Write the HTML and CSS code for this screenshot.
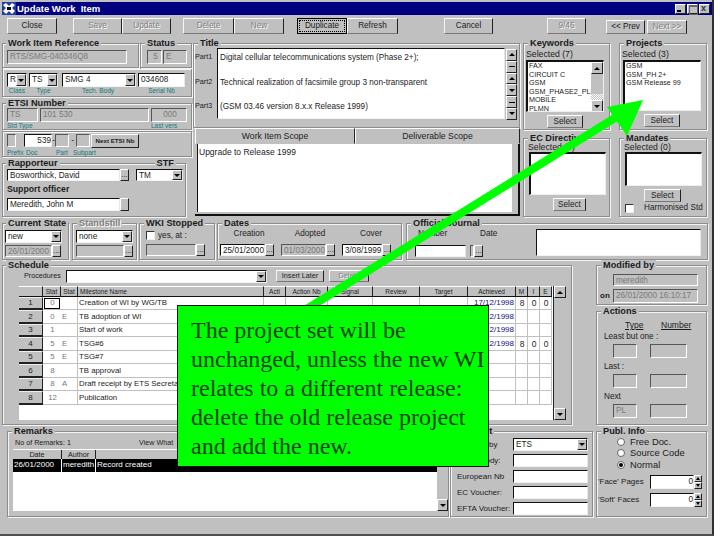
FILE: index.html
```html
<!DOCTYPE html>
<html lang="en">
<head>
<meta charset="utf-8">
<title>Update Work Item</title>
<link rel="stylesheet" href="styles.css">
</head>
<body>
<div class="window">
  <div class="titlebar">
    <svg class="app-icon" width="14" height="13" viewBox="0 0 14 13"><rect width="14" height="13" fill="#2040a0"/><path d="M1 3l3-2 3 3 3-3 3 2-3 3 3 3-3 3-3-3-3 3-3-3 3-3z" fill="#fff"/><path d="M5 5h4v3H5z" fill="#000"/></svg>
    <span class="title-text">Update Work&nbsp; Item</span>
    <div class="win-btns">
      <span class="win-btn min"></span><span class="win-btn max"></span><span class="win-btn cls"></span>
    </div>
  </div>

  <div class="toolbar">
    <button class="btn tb w50">Close</button>
    <button class="btn tb w49 dis ml16">Save</button>
    <button class="btn tb w49 dis">Update</button>
    <button class="btn tb w51 dis ml12">Delete</button>
    <button class="btn tb w50 dis">New</button>
    <button class="btn tb w50 focus ml13">Duplicate</button>
    <button class="btn tb w51">Refresh</button>
    <button class="btn tb w49 ml46">Cancel</button>
    <button class="btn tb w39 dis ml54">9/46</button>
    <button class="btn nav w39 ml20">&lt;&lt; Prev</button>
    <button class="btn nav w40 dis ml2">Next &gt;&gt;</button>
  </div>

  <div class="band1">
    <div class="col-a">
      <div class="ref-row">
        <div class="frame ref-frame">
          <div class="lg">Work Item Reference</div>
          <div class="fld dis-f w120 h14">RTS/SMG-040346Q8</div>
        </div>
        <div class="frame status-frame">
          <div class="lg">Status</div>
          <div class="flex-row g1">
            <div class="fld dis-f w15 h14 ctr">5</div>
            <div class="fld dis-f w24 h14">E</div>
          </div>
        </div>
      </div>
      <div class="box box-class">
        <div class="grid-class">
          <div class="fld combo h14"><span class="grow">R</span><span class="arr dn"></span></div>
          <div class="fld combo h14"><span class="grow">TS</span><span class="arr dn"></span></div>
          <div class="fld combo h14"><span class="grow">SMG 4</span><span class="arr dn"></span></div>
          <div class="fld h14">034608</div>
          <div class="tiny ctr">Class</div>
          <div class="tiny ctr">Type</div>
          <div class="tiny ctr">Tech. Body</div>
          <div class="tiny ctr">Serial Nb</div>
        </div>
      </div>
      <div class="frame etsi-frame">
        <div class="lg">ETSI Number</div>
        <div class="grid-etsi">
          <div class="fld dis-f h14">TS</div>
          <div class="fld dis-f h14">101 530</div>
          <div class="fld dis-f h14 ctr">000</div>
          <div class="tiny">Std Type</div>
          <div></div>
          <div class="tiny">Last vers</div>
        </div>
      </div>
      <div class="box box-doc">
        <div class="grid-doc">
          <div class="fld dis-f h13 cell-a"></div>
          <div class="fld h13 right cell-b">539</div>
          <div class="sep">-</div>
          <div class="fld dis-f h13"></div>
          <div class="sep">-</div>
          <div class="fld dis-f h13"></div>
          <div></div>
          <button class="btn next-btn">Next ETSI Nb</button>
        </div>
        <div class="grid-doc-labels">
          <span class="tiny">Prefix</span><span class="tiny">Doc</span><span class="tiny">Part</span><span class="tiny">Subpart</span>
        </div>
      </div>
      <div class="frame rapp-frame">
        <div class="lg-row">
          <div class="lg flush">Rapporteur</div>
          <div class="lg flush stf-lg">STF</div>
        </div>
        <div class="flex-row">
          <div class="fld w113 h12">Bosworthick, David</div>
          <span class="dots h12">...</span>
          <div class="fld combo w47 h12 ml7"><span class="grow">TM</span><span class="arr dn"></span></div>
        </div>
        <div class="bold-label">Support officer</div>
        <div class="flex-row">
          <div class="fld w113 h13">Meredith, John M</div>
          <span class="dots h13"></span>
        </div>
      </div>
    </div>

    <div class="col-b">
      <div class="frame title-frame">
        <div class="lg">Title</div>
        <div class="title-body">
          <div class="part-labels"><span>Part1</span><span>Part2</span><span>Part3</span></div>
          <div class="fld part-box">
            <span>Digital cellular telecommunications system (Phase 2+);</span>
            <span>Technical realization of facsimile group 3 non-transparent</span>
            <span>(GSM 03.46 version 8.x.x Release 1999)</span>
          </div>
          <div class="spin-col">
            <span class="arr up tall"></span><span class="arr bar tall"></span>
            <span class="arr up tall"></span><span class="arr dn tall"></span>
            <span class="arr bar tall"></span><span class="arr dn tall"></span>
          </div>
        </div>
      </div>
      <div class="tabs">
        <div class="tab tab-a">Work Item Scope</div>
        <div class="tab tab-b">Deliverable Scope</div>
      </div>
      <div class="scope-panel">
        <div class="scope-text">Upgrade to Release 1999</div>
      </div>
    </div>

    <div class="col-c">
      <div class="frame kw-frame">
        <div class="lg">Keywords</div>
        <div class="sel-label">Selected (7)</div>
        <div class="list kw-list">
          <div class="list-items">
            <div>FAX</div><div>CIRCUIT C</div><div>GSM</div><div>GSM_PHASE2_PLUS</div><div>MOBILE</div><div>PLMN</div>
          </div>
          <div class="vscroll"><span class="arr up"></span><span class="track"><span class="thumb"></span></span><span class="arr dn"></span></div>
        </div>
        <div class="btn-row"><button class="btn sel w36">Select</button></div>
      </div>
      <div class="frame ec-frame">
        <div class="lg">EC Directive</div>
        <div class="sel-label tight">Selected (0)</div>
        <div class="list ec-list"></div>
        <div class="btn-row"><button class="btn sel w33 ec-btn">Select</button></div>
      </div>
    </div>

    <div class="col-d">
      <div class="frame kw-frame">
        <div class="lg">Projects</div>
        <div class="sel-label">Selected (3)</div>
        <div class="list pj-list">
          <div class="list-items">
            <div>GSM</div><div>GSM_PH 2+</div><div>GSM Release 99</div>
          </div>
        </div>
        <div class="btn-row"><button class="btn sel w36 pj-btn">Select</button></div>
      </div>
      <div class="frame ec-frame">
        <div class="lg">Mandates</div>
        <div class="sel-label tight">Selected (0)</div>
        <div class="list md-list"></div>
        <div class="btn-row"><button class="btn sel w37 md-btn">Select</button></div>
        <div class="harm"><span class="check"></span><span>Harmonised Std</span></div>
      </div>
    </div>
  </div>

  <div class="band2">
    <div class="frame cs-frame">
      <div class="lg">Current State</div>
      <div class="fld combo w57 h13"><span class="grow">new</span><span class="arr dn"></span></div>
      <div class="flex-row mt2">
        <div class="fld dis-f w47 h12">26/01/2000</div><span class="dots h12 w10">...</span>
      </div>
    </div>
    <div class="frame ss-frame">
      <div class="lg muted">Standstill</div>
      <div class="fld combo w57 h13"><span class="grow">none</span><span class="arr dn"></span></div>
      <div class="flex-row mt2">
        <div class="fld dis-f w48 h12"></div><span class="dots h12">...</span>
      </div>
    </div>
    <div class="frame wk-frame">
      <div class="lg">WKI Stopped</div>
      <div class="yes-row"><span class="check"></span><span>yes, at :</span></div>
      <div class="flex-row wk-field">
        <div class="fld dis-f w50 h12"></div><span class="dots h12">...</span>
      </div>
    </div>
    <div class="frame dt-frame">
      <div class="lg">Dates</div>
      <div class="grid-dates">
        <div class="ctr lbl">Creation</div><div class="ctr lbl">Adopted</div><div class="ctr lbl">Cover</div>
        <div class="flex-row"><div class="fld grow h12 clip">25/01/2000</div><span class="dots h12">...</span></div>
        <div class="flex-row"><div class="fld dis-f grow h12 clip">01/03/2000</div><span class="dots h12">...</span></div>
        <div class="flex-row"><div class="fld grow h12 clip">3/08/1999</div><span class="dots h12">...</span></div>
      </div>
    </div>
    <div class="frame oj-frame">
      <div class="lg">Official Journal</div>
      <div class="oj-body">
        <div class="grid-oj">
          <div class="lbl oj-num">Number</div><div class="lbl oj-date">Date</div>
          <div class="fld h12"></div>
          <div class="flex-row"><div class="fld dis-f grow h12"></div><span class="dots h12">...</span></div>
        </div>
        <div class="fld oj-big"></div>
      </div>
    </div>
  </div>

  <div class="band3">
    <div class="left3">
      <div class="frame sch-frame">
        <div class="lg">Schedule</div>
        <div class="proc-row">
          <span class="proc-label">Procedures</span>
          <div class="fld combo w201 h13"><span class="grow"></span><span class="arr dn"></span></div>
          <button class="btn proc-btn w48 ml9">Insert Later</button>
          <button class="btn proc-btn w40 ml5 dis">Delete</button>
        </div>
        <div class="sch-grid-wrap">
          <div class="sch-grid">
            <table class="sch">
              <colgroup>
                <col class="c24"><col class="c18"><col class="c17"><col class="c186"><col class="c22"><col class="c42"><col class="c45"><col class="c47"><col class="c48"><col class="c48"><col class="c12"><col class="c12"><col class="c12">
              </colgroup>
              <thead>
                <tr><th></th><th>Stat</th><th>Stat</th><th class="left">Milestone Name</th><th>Acti</th><th>Action Nb</th><th>Signal</th><th>Review</th><th>Target</th><th>Achieved</th><th>M</th><th>I</th><th>E</th></tr>
              </thead>
              <tbody>
                <tr><th>1</th><td class="num cur">0</td><td class="st"></td><td>Creation of WI by WG/TB</td><td></td><td></td><td></td><td></td><td></td><td class="ach">17/12/1998</td><td class="m">8</td><td class="m">0</td><td class="m">0</td></tr>
                <tr><th>2</th><td class="num">0</td><td class="st">E</td><td>TB adoption of WI</td><td></td><td></td><td></td><td></td><td></td><td class="ach">17/12/1998</td><td></td><td></td><td></td></tr>
                <tr><th>3</th><td class="num">1</td><td class="st"></td><td>Start of work</td><td></td><td></td><td></td><td></td><td></td><td class="ach">17/12/1998</td><td></td><td></td><td></td></tr>
                <tr><th>4</th><td class="num">5</td><td class="st">E</td><td>TSG#6</td><td></td><td></td><td></td><td></td><td></td><td class="ach">17/12/1998</td><td class="m">8</td><td class="m">0</td><td class="m">0</td></tr>
                <tr><th>5</th><td class="num">5</td><td class="st">E</td><td>TSG#7</td><td></td><td></td><td></td><td></td><td></td><td></td><td></td><td></td><td></td></tr>
                <tr><th>6</th><td class="num">8</td><td class="st"></td><td>TB approval</td><td></td><td></td><td></td><td></td><td></td><td></td><td></td><td></td><td></td></tr>
                <tr><th>7</th><td class="num">8</td><td class="st">A</td><td>Draft receipt by ETS Secretariat</td><td></td><td></td><td></td><td></td><td></td><td></td><td></td><td></td><td></td></tr>
                <tr><th>8</th><td class="num">12</td><td class="st"></td><td>Publication</td><td></td><td></td><td></td><td></td><td></td><td></td><td></td><td></td><td></td></tr>
              </tbody>
            </table>
          </div>
          <div class="vscroll sch-scroll"><span class="arr up"></span><span class="track"></span><span class="arr dn"></span></div>
        </div>
      </div>
      <div class="row-bottom">
        <div class="frame rm-frame">
          <div class="lg">Remarks</div>
          <div class="rm-top"><span class="rm-count">No of Remarks: 1</span><span>View What</span></div>
          <div class="rm-grid">
            <div class="rm-main">
              <div class="rm-head"><span class="rm-c1">Date</span><span class="rm-c2">Author</span><span class="rm-c3"></span></div>
              <div class="rm-row"><span class="rm-c1">26/01/2000</span><span class="rm-c2">meredith</span><span class="rm-c3">Record created</span></div>
            </div>
            <div class="vscroll rm-scroll"><span class="track"></span><span class="arr dn"></span></div>
          </div>
        </div>
        <div class="frame eu-frame">
          <div class="lg">Contact</div>
          <div class="eu-grid">
            <span class="eu-l">Handled by</span><div class="fld combo h13"><span class="grow">ETS</span><span class="arr dn"></span></div>
            <span class="eu-l">Resp. Body:</span><div class="fld h13"></div>
            <span class="eu-l">European Nb</span><div class="fld h13"></div>
            <span class="eu-l">EC Voucher:</span><div class="fld h13"></div>
            <span class="eu-l">EFTA Voucher:</span><div class="fld h13"></div>
          </div>
        </div>
      </div>
    </div>

    <div class="right3">
      <div class="frame mod-frame">
        <div class="lg">Modified by</div>
        <div class="fld dis-f w85 h12 mod-a">meredith</div>
        <div class="flex-row mod-b"><span class="on">on</span><div class="fld dis-f w85 h14">26/01/2000 16:10:17</div></div>
      </div>
      <div class="frame act-frame">
        <div class="lg">Actions</div>
        <div class="act-head"><span class="u type">Type</span><span class="u">Number</span></div>
        <div class="act-lbl">Least but one :</div>
        <div class="act-row"><div class="fld dis-f w24 h14"></div><div class="fld dis-f w37 h14"></div></div>
        <div class="act-lbl">Last :</div>
        <div class="act-row"><div class="fld dis-f w24 h14"></div><div class="fld dis-f w37 h14"></div></div>
        <div class="act-lbl">Next</div>
        <div class="act-row"><div class="fld dis-f w24 h14">PL</div><div class="fld dis-f w37 h14"></div></div>
      </div>
      <div class="frame pub-frame">
        <div class="lg">Publ. Info</div>
        <div class="radio-row"><span class="radio"></span><span>Free Doc.</span></div>
        <div class="radio-row"><span class="radio"></span><span>Source Code</span></div>
        <div class="radio-row"><span class="radio on-r"></span><span>Normal</span></div>
        <div class="pg-row first"><span class="pg-l">'Face' Pages</span><div class="fld w44 h14 right">0</div><span class="updown"><i class="arr up"></i><i class="arr dn"></i></span></div>
        <div class="pg-row"><span class="pg-l">'Soft' Faces</span><div class="fld w44 h14 right">0</div><span class="updown"><i class="arr up"></i><i class="arr dn"></i></span></div>
      </div>
    </div>
  </div>

  <svg class="arrow" width="714" height="536" viewBox="0 0 714 536">
    <line x1="305" y1="310" x2="618" y2="116" stroke="#00ff00" stroke-width="8"/>
    <polygon points="643,100 607,107 627,136" fill="#00ff00"/>
  </svg>

  <div class="callout">The project set will be unchanged, unless the new WI relates to a different release: delete the old release project and add the new.</div>
</div>
</body>
</html>
```

FILE: styles.css
```css
* { box-sizing: border-box; }
html, body { margin: 0; padding: 0; background: #fff; }
body { font: 8.2px/10px "Liberation Sans", Arial, sans-serif; color: #1c1c1c; }

.window {
  position: relative;
  width: 714px;
  height: 536px;
  background: #c0c0c0;
  border-right: 2px solid #303030;
  border-bottom: 2px solid #505050;
  padding-top: 2px;
  overflow: hidden;
}

/* title bar */
.titlebar {
  display: flex;
  align-items: center;
  height: 13px;
  margin-left: 2px;
  background: #000080;
  color: #fff;
}
.app-icon { margin-right: 1px; flex: none; }
.title-text { font-size: 9.5px; font-weight: bold; }
.win-btns { margin-left: auto; margin-right: 2px; display: flex; gap: 1px; }
.win-btn {
  width: 11px; height: 10px; background: #c0c0c0;
  border: 1px solid; border-color: #fff #222 #222 #fff; position: relative;
}
.min::after { content: ""; position: absolute; left: 1px; bottom: 1px; width: 4px; height: 2px; background: #000; }
.max::after { content: ""; position: absolute; left: 1px; top: 0; width: 7px; height: 7px; border: 1px solid #666; border-top-width: 2px; }
.cls::after { content: "x"; position: absolute; left: 1px; top: -2px; font: bold 9px/10px "Liberation Sans", sans-serif; color: #333; }

/* buttons */
.btn {
  display: block;
  margin: 0;
  padding: 0;
  font: 8.2px/10px "Liberation Sans", Arial, sans-serif;
  color: #1c1c1c;
  background: #c0c0c0;
  border: 1px solid;
  border-color: #fff #222 #777 #f4f4f4;
  border-radius: 0;
  white-space: nowrap;
  overflow: hidden;
}
.btn.dis { color: #808080; text-shadow: 1px 1px 0 #fff; }
.btn.focus { border: 1px solid #000; outline: 1px dotted #000; outline-offset: -3px; }
.toolbar { display: flex; align-items: flex-start; height: 16px; margin-top: 3px; padding-left: 7px; }
.tb { height: 16px; }
.nav { height: 14px; margin-top: 2px; }
.sel { height: 13px; }
.proc-btn { height: 12px; font-size: 7.2px; }
.next-btn { height: 14px; font-size: 6.2px; font-weight: bold; border-bottom-color: #222; }

/* sizes */
.w10 { width: 10px; flex: none; } .w15 { width: 15px; } .w24 { width: 24px; } .w33 { width: 33px; } .w36 { width: 36px; } .w37 { width: 37px; }
.w39 { width: 39px; } .w40 { width: 40px; } .w44 { width: 44px; } .w47 { width: 47px; } .w48 { width: 48px; } .w49 { width: 49px; }
.w50 { width: 50px; } .w51 { width: 51px; } .w57 { width: 57px; } .w85 { width: 85px; } .w113 { width: 113px; } .w120 { width: 120px; } .w201 { width: 201px; }
.h12 { height: 12px; } .h13 { height: 13px; } .h14 { height: 14px; }
.ml2 { margin-left: 2px; } .ml5 { margin-left: 5px; } .ml7 { margin-left: 7px; } .ml9 { margin-left: 9px; } .ml12 { margin-left: 12px; } .ml13 { margin-left: 13px; }
.ml16 { margin-left: 16px; } .ml20 { margin-left: 20px; } .ml46 { margin-left: 46px; } .ml54 { margin-left: 54px; }
.mt2 { margin-top: 2px; }
.ctr { text-align: center; } .right { text-align: right; } .grow { flex: 1; min-width: 0; }
.clip { overflow: hidden; }
.flex-row { display: flex; align-items: flex-start; }
.g1 { gap: 1px; }

/* frames: --p is the frame's left padding, --o the legend's offset from the frame edge */
.frame {
  border: 1px solid #8c8c8c;
  box-shadow: inset 1px 1px 0 #f4f4f4, 1px 1px 0 #f4f4f4;
  padding-left: var(--p, 0px);
}
.lg {
  width: fit-content;
  height: 10px;
  margin: -6px 0 0 calc(var(--o, 4px) - var(--p, 0px));
  padding: 0 2px;
  background: #c0c0c0;
  font-size: 9.2px;
  font-weight: bold;
  line-height: 10px;
  white-space: nowrap;
}
.lg.muted { color: #808080; text-shadow: 1px 1px 0 #fff; }
.lg-row { display: flex; margin: -6px 0 0 -1px; height: 10px; }
.lg.flush { margin: 0; }
.lg.stf-lg { margin-left: 95px; }
.box { border: 1px solid #8c8c8c; box-shadow: inset 1px 1px 0 #f4f4f4, 1px 1px 0 #f4f4f4; }

/* fields */
.fld {
  background: #fff;
  border: 1px solid;
  border-color: #111 #e8e8e8 #f4f4f4 #111;
  padding: 1px 0 0 2px;
  line-height: 10px;
  white-space: nowrap;
  overflow: hidden;
  flex: none;
}
.dis-f { background: #c0c0c0; color: #7a7a7a; border-color: #555 #fff #fff #555; }
.combo { display: flex; padding: 0 0 0 2px; align-items: stretch; line-height: 11px; }
.arr {
  display: flex; align-items: center; justify-content: center;
  flex: none; width: 10px;
  background: #c0c0c0;
  border: 1px solid; border-color: #fff #222 #222 #fff;
}
.arr::before { content: ""; display: block; width: 0; height: 0; border-left: 3px solid transparent; border-right: 3px solid transparent; }
.arr.dn::before { border-top: 3px solid #000; }
.arr.up::before { border-bottom: 3px solid #000; }
.arr.bar::before { width: 6px; height: 1px; background: #000; border: 0; }
.dots {
  flex: none; width: 9px; background: #c0c0c0;
  border: 1px solid; border-color: #fff #222 #222 #fff;
  font-size: 8px; line-height: 9px; text-align: center; overflow: hidden;
}
.tiny { font-size: 6.5px; line-height: 8px; color: #107c7c; white-space: nowrap; }
.lbl { font-size: 8.2px; line-height: 10px; color: #222; }

/* band 1 */
.band1 { display: flex; margin-top: 9px; padding-left: 2px; }
.col-a { width: 191px; flex: none; }
.col-b { width: 327px; margin-left: 0; flex: none; }
.col-c { width: 87px; margin-left: 3px; flex: none; }
.col-d { width: 88px; margin-left: 9px; flex: none; }

.ref-row { display: flex; width: 190px; height: 25px; }
.ref-frame { --p: 4px; --o: 3px; width: 137px; flex: none; margin-right: 1px; }
.ref-frame .fld, .status-frame .flex-row { margin-top: 2px; }
.status-frame { --p: 6px; width: 52px; flex: none; }
.box-class { width: 190px; height: 29px; padding: 4px 0 0 4px; }
.grid-class { display: grid; grid-template-columns: 20px 29px 76px 47px; column-gap: 2px; row-gap: 0; }
.grid-class > :nth-child(3) { margin-left: 2px; width: 74px; }
.etsi-frame { --p: 4px; --o: 3px; width: 190px; height: 27px; margin-top: 6px; }
.grid-etsi { display: grid; grid-template-columns: 31px 109px 36px; column-gap: 2px; }
.box-doc { width: 190px; height: 26px; margin-top: 1px; padding: 2px 0 0 4px; }
.grid-doc { display: grid; grid-template-columns: 9px 8px 28px 3px 14px 7px 14px 1px 48px; }
.cell-a { grid-column: 1; }
.cell-b { grid-column: 3; }
.sep { text-align: center; line-height: 13px; }
.grid-doc-labels { display: flex; margin-top: 1px; }
.grid-doc-labels span:nth-child(1) { width: 19px; }
.grid-doc-labels span:nth-child(2) { width: 30px; }
.grid-doc-labels span:nth-child(3) { width: 17px; }
.rapp-frame { --p: 4px; width: 184px; height: 54px; margin-top: 6px; }
.lg-row + .flex-row { margin-top: 1px; }
.bold-label { font-size: 8.7px; font-weight: bold; height: 17px; line-height: 17px; }

.title-frame { width: 327px; height: 85px; }
.title-body { display: flex; }
.part-labels { width: 23px; padding: 4px 0 0 1px; display: grid; grid-auto-rows: 24.5px; font-size: 7.2px; flex: none; }
.part-box { width: 288px; height: 71px; padding: 4px 0 0 2px; display: grid; grid-auto-rows: 24.5px; }
.spin-col { display: flex; flex-direction: column; margin: 1px 0 0 1px; }
.arr.tall { width: 11px; height: 11.8px; }
.tabs { display: flex; height: 16px; padding-left: 2px; }
.tab { border: 1px solid; border-color: #fff #222 #c0c0c0 #fff; text-align: center; font-size: 8.7px; line-height: 14px; }
.tab-a { width: 160px; }
.tab-b { width: 165px; }
.scope-panel {
  width: 325px; height: 72px; margin-left: 2px; padding: 0 6px 2px 2px;
  border-right: 2px solid #111; border-bottom: 2px solid #111;
}
.scope-text { background: #fff; height: 68px; border-left: 1px solid #111; padding: 3px 0 0 1px; font-size: 8.5px; }

.kw-frame { --p: 2px; height: 87px; }
.ec-frame { height: 79px; margin-top: 8px; }
.sel-label { height: 11px; margin-top: 1px; font-size: 8.7px; line-height: 11px; white-space: nowrap; }
.sel-label.tight { margin: -1px 0 0 4px; height: 10px; line-height: 10px; }
.list { background: #fff; border: 1px solid; border-width: 2px 1px 1px 2px; border-color: #111 #eee #eee #111; display: flex; overflow: hidden; }
.kw-list { width: 78px; height: 52px; }
.pj-list { width: 78px; height: 51px; margin-left: 1px; }
.list-items { flex: 1; min-width: 0; font-size: 7.2px; line-height: 8.6px; white-space: nowrap; overflow: hidden; padding-left: 1px; }
.vscroll { display: flex; flex-direction: column; width: 12px; flex: none; background: #c0c0c0; }
.vscroll .arr { width: 100%; height: 12px; }
.track { flex: 1; display: block; }
.thumb { display: block; height: 6px; margin-top: 20px; background: repeating-conic-gradient(#fff 0 25%, #c0c0c0 0 50%) 0 0 / 2px 2px; }
.btn-row { display: flex; margin-top: 3px; }
.kw-frame .btn-row .btn { margin-left: 21px; }
.kw-frame .btn-row .pj-btn { margin-left: 22px; }
.ec-list { width: 77px; height: 43px; margin: 0 0 0 5px; }
.md-list { width: 77px; height: 34px; margin: 0 0 0 5px; }
.ec-btn { margin-left: 29px; }
.md-btn { margin-left: 24px; }
.check { width: 9px; height: 9px; background: #fff; border: 1px solid; border-color: #333 #eee #eee #333; flex: none; }
.harm { display: flex; align-items: center; height: 10px; margin-top: 1px; padding-left: 5px; gap: 10px; white-space: nowrap; }

/* band 2 */
.band2 { display: flex; height: 37px; margin-top: 6px; padding-left: 2px; }
.band2 .frame { height: 37px; flex: none; }
.band2 .lg + * { margin-top: 2px; }
.cs-frame { --p: 2px; --o: 3px; width: 67px; }
.ss-frame { --p: 3px; width: 65px; margin-left: 3px; }
.wk-frame { --p: 6px; width: 76px; margin-left: 2px; }
.dt-frame { --p: 2px; width: 185px; margin-left: 2px; }
.oj-frame { width: 302px; margin-left: 4px; }
.band2 .yes-row { display: flex; align-items: center; gap: 3px; height: 9px; margin-top: 3px; }
.wk-field { margin: 4px 0 0 0; }
.band2 .grid-dates { display: grid; grid-template-columns: 58px 58px 58px; column-gap: 3px; row-gap: 5px; margin-top: 1px; }
.band2 .oj-body { display: flex; margin-top: 1px; }
.grid-oj { display: grid; grid-template-columns: 51px 57px; column-gap: 4px; row-gap: 5px; margin-left: 8px; height: 28px; }
.oj-num { padding-left: 3px; }
.oj-date { padding-left: 10px; }
.oj-big { width: 165px; height: 27px; margin-left: 9px; }

/* band 3 */
.band3 { display: flex; margin-top: 5px; padding-left: 2px; }
.left3 { width: 591px; flex: none; }
.right3 { width: 111px; margin-left: 3px; flex: none; }
.sch-frame { --o: 3px; width: 570px; height: 160px; }
.proc-row { display: flex; align-items: flex-start; height: 13px; }
.proc-label { width: 42px; margin-left: 21px; font-size: 7.2px; line-height: 12px; flex: none; }
.sch-grid-wrap { display: flex; margin: 3px 0 0 16px; width: 547px; height: 134px; }
.sch-grid { width: 534px; height: 134px; background: #fff; flex: none; }
.sch { width: 533px; table-layout: fixed; border-collapse: separate; border-spacing: 0; line-height: 10px; }
.c24 { width: 24px; } .c18 { width: 18px; } .c17 { width: 17px; } .c186 { width: 186px; } .c22 { width: 22px; } .c42 { width: 42px; } .c45 { width: 45px; } .c47 { width: 47px; } .c48 { width: 48px; } .c12 { width: 12px; }
.sch th, .sch td { padding: 0; overflow: hidden; white-space: nowrap; font-weight: normal; }
.sch thead th {
  height: 10px; background: #c0c0c0; text-align: center; font-size: 6.5px; line-height: 9px;
  border-top: 1px solid #fff; border-right: 1px solid #222; border-bottom: 1px solid #111;
}
.sch thead th.left { text-align: left; padding-left: 2px; }
.sch tbody tr:nth-child(odd) th, .sch tbody tr:nth-child(odd) td { height: 13px; }
.sch tbody tr:nth-child(even) th, .sch tbody tr:nth-child(even) td { height: 14px; }
.sch tbody th { background: #c0c0c0; text-align: center; border-bottom: 2px solid #222; border-right: 1px solid #222; border-top: 1px solid #eee; font-size: 8px; }
.sch tbody td { border-right: 1px solid #c0c0c0; border-bottom: 1px solid #c0c0c0; padding-left: 1px; font-size: 7.8px; }
.sch td.num { text-align: center; color: #777; border-right: 0; }
.sch td.cur { outline: 1.5px solid #000; outline-offset: -2px; }
.sch td.st { color: #777; text-align: left; }
.sch td.ach { color: #101080; text-align: right; padding-right: 1px; font-size: 8px; }
.sch td.m { text-align: center; font-size: 8.5px; }
.sch-scroll { width: 13px; height: 134px; border-left: 1px solid #222; }
.row-bottom { display: flex; margin-top: 6px; padding-left: 5px; }
.rm-frame { --p: 5px; width: 442px; height: 86px; flex: none; }
.rm-top { display: flex; height: 13px; padding: 2px 0 0 2px; font-size: 7.2px; line-height: 9px; }
.rm-count { width: 124px; }
.rm-grid { display: flex; width: 435px; height: 62px; background: #fff; }
.rm-main { flex: 1; min-width: 0; }
.rm-head { display: flex; height: 10px; background: #c0c0c0; border-top: 1px solid #fff; font-size: 7.2px; line-height: 9px; text-align: center; }
.rm-head span { border-right: 1px solid #222; }
.rm-row { display: flex; height: 13px; background: #000; color: #fff; font-size: 8px; line-height: 12px; }
.rm-row span { border-right: 1px solid #fff; padding-left: 1px; white-space: nowrap; overflow: hidden; }
.rm-c1 { width: 49px; flex: none; }
.rm-c2 { width: 34px; flex: none; }
.rm-head .rm-c3, .rm-row .rm-c3 { flex: 1; border-right: 0; }
.rm-scroll { width: 11px; }
.eu-frame { --p: 6px; --o: 5px; width: 143px; height: 86px; flex: none; margin-left: 1px; }
.eu-grid { display: grid; grid-template-columns: 56px 75px; row-gap: 3px; margin-top: 2px; }
.eu-l { font-size: 8px; line-height: 13px; white-space: nowrap; }

.mod-frame { --p: 3px; width: 111px; height: 40px; }
.mod-a { margin: 4px 0 0 13px; }
.mod-b { margin-top: 3px; }
.on { width: 13px; line-height: 14px; font-weight: bold; font-size: 8px; }
.act-frame { --p: 16px; width: 111px; height: 114px; margin-top: 6px; }
.act-head { display: flex; height: 10px; margin: 4px 0 0 12px; font-size: 8.5px; }
.u { text-decoration: underline; }
.type { width: 36px; }
.act-lbl { height: 12px; margin: 4px 0 0 -9px; line-height: 10px; white-space: nowrap; }
.act-row { display: flex; gap: 13px; height: 14px; }
.act-head + .act-lbl { margin-top: 2px; }
.pub-frame { --p: 1px; width: 111px; height: 86px; margin-top: 6px; }
.radio-row { display: flex; align-items: center; gap: 5px; height: 11.5px; margin-left: 19px; font-size: 9.4px; white-space: nowrap; }
.radio { width: 8px; height: 8px; border-radius: 50%; background: #fff; border: 1px solid #666; flex: none; display: flex; align-items: center; justify-content: center; }
.on-r::after { content: ""; width: 4px; height: 4px; background: #000; border-radius: 50%; }
.pg-row { display: flex; margin-top: 4px; align-items: center; height: 14px; }
.pg-l { width: 52px; font-size: 8px; white-space: nowrap; flex: none; }
.updown { display: flex; flex-direction: column; width: 8px; height: 14px; flex: none; }
.updown .arr { width: 8px; height: 7px; }
.updown .arr::before { border-left-width: 2px; border-right-width: 2px; }

/* overlays */
.arrow { position: absolute; left: 0; top: 0; pointer-events: none; }
.callout {
  position: absolute;
  left: 177px;
  top: 305px;
  width: 312px;
  height: 162px;
  padding: 10px 0 0 13px;
  background: #00ff00;
  border: 1px solid #111;
  color: #064206;
  font: 24px/29px "Liberation Serif", "Times New Roman", serif;
}
```
